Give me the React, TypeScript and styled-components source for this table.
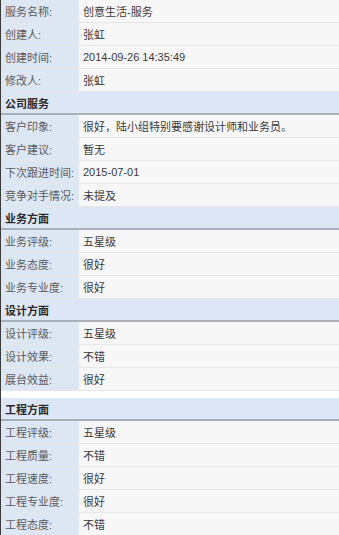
import styled, { createGlobalStyle } from "styled-components";

const GlobalStyle = createGlobalStyle`
  html, body {
    margin: 0;
    padding: 0;
    background: #ffffff;
  }
  body {
    font-family: "Liberation Sans", "Noto Sans CJK SC", sans-serif;
    font-size: 11px;
  }
`;

type Field = [string, string];

type Group = {
  title?: string;
  spaced?: boolean;
  fields: Field[];
};

const groups: Group[] = [
  {
    fields: [
      ["服务名称:", "创意生活-服务"],
      ["创建人:", "张虹"],
      ["创建时间:", "2014-09-26 14:35:49"],
      ["修改人:", "张虹"],
    ],
  },
  {
    title: "公司服务",
    fields: [
      ["客户印象:", "很好，陆小组特别要感谢设计师和业务员。"],
      ["客户建议:", "暂无"],
      ["下次跟进时间:", "2015-07-01"],
      ["竞争对手情况:", "未提及"],
    ],
  },
  {
    title: "业务方面",
    fields: [
      ["业务评级:", "五星级"],
      ["业务态度:", "很好"],
      ["业务专业度:", "很好"],
    ],
  },
  {
    title: "设计方面",
    fields: [
      ["设计评级:", "五星级"],
      ["设计效果:", "不错"],
      ["展台效益:", "很好"],
    ],
  },
  {
    title: "工程方面",
    spaced: true,
    fields: [
      ["工程评级:", "五星级"],
      ["工程质量:", "不错"],
      ["工程速度:", "很好"],
      ["工程专业度:", "很好"],
      ["工程态度:", "不错"],
    ],
  },
];

const Sheet = styled.div`
  display: flex;
  flex-direction: column;
  width: 339px;
  border-left: 1px solid #3c3c3c;
  box-sizing: border-box;
`;

const Section = styled.section<{ $spaced?: boolean }>`
  display: flex;
  flex-direction: column;
  margin-top: ${(p) => (p.$spaced ? "7px" : "0")};
`;

const SectionTitle = styled.div`
  height: 21px;
  display: flex;
  align-items: center;
  padding-left: 4px;
  background: #dce6f4;
  border-bottom: 2px solid #aab0b8;
  font-weight: bold;
  color: #2a2a2a;
`;

const Row = styled.div`
  display: grid;
  grid-template-columns: 78px 1fr;
  height: 23px;
  border-bottom: 1px solid #e6e6e6;
  box-sizing: border-box;
`;

const Label = styled.div`
  display: flex;
  align-items: center;
  padding-left: 4px;
  background: #dde6f3;
  color: #5a5a5a;
  white-space: nowrap;
`;

const Value = styled.div`
  display: flex;
  align-items: center;
  padding-left: 4px;
  background: #f7f7f7;
  color: #3a3a3a;
  white-space: nowrap;
  overflow: hidden;
`;

export default function App() {
  return (
    <>
      <GlobalStyle />
      <Sheet>
        {groups.map((g, i) => (
          <Section key={i} $spaced={g.spaced}>
            {g.title && <SectionTitle>{g.title}</SectionTitle>}
            {g.fields.map(([label, value]) => (
              <Row key={label}>
                <Label>{label}</Label>
                <Value>{value}</Value>
              </Row>
            ))}
          </Section>
        ))}
      </Sheet>
    </>
  );
}
